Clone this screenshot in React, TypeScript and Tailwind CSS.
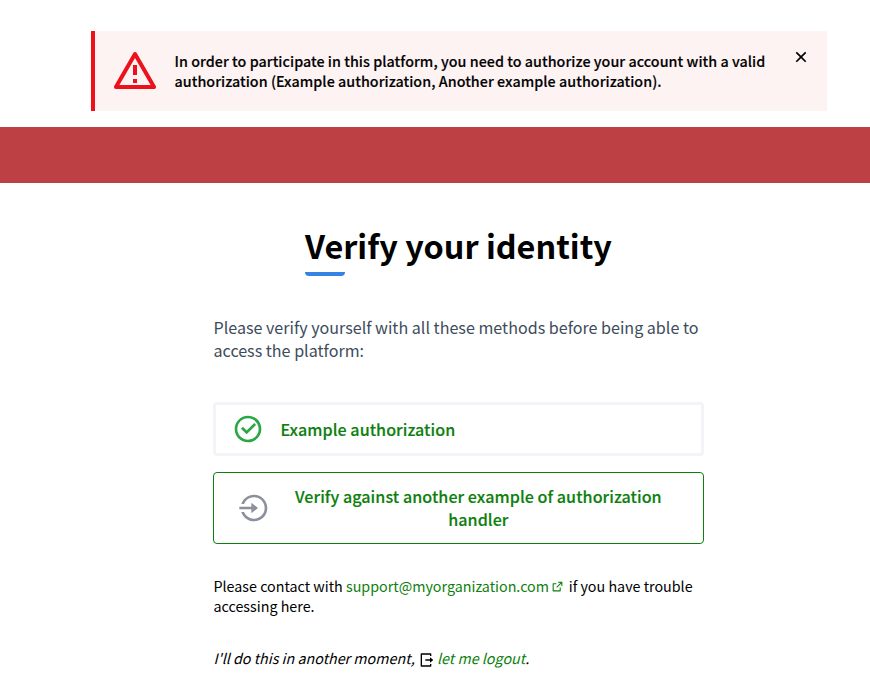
import {
  RiAlertLine,
  RiCheckboxCircleLine,
  RiCloseLine,
  RiExternalLinkLine,
  RiLoginCircleLine,
  RiLogoutBoxRLine,
} from "react-icons/ri";

function Alert() {
  return (
    <div className="ml-[91px] mt-[31px] flex h-20 w-[736px] border-l-4 border-[#ec111a] bg-[#fdf3f2]">
      <RiAlertLine className="ml-4 mt-4 size-12 shrink-0 text-[#ec111a]" />
      <p className="ml-[15.5px] mt-5 grow whitespace-nowrap text-[14.3px] leading-5 font-medium tracking-[0.045px] text-[#020203] [-webkit-text-stroke:0.15px_#020203]">
        In order to participate in this platform, you need to authorize your account with a valid
        <br />
        authorization (Example authorization, Another example authorization).
      </p>
      <button className="mr-4 mt-4 size-5 shrink-0" aria-label="Close">
        <RiCloseLine className="size-5" />
      </button>
    </div>
  );
}

export default function App() {
  return (
    <div className="flex h-[681px] w-[870px] flex-col overflow-hidden bg-white font-['Noto_Sans_CJK_SC',sans-serif] text-black">
      <Alert />
      <div className="mt-4 h-14 shrink-0 bg-[#bd4044]" />
      <main className="ml-[213px] w-[491px]">
        <div className="ml-[92px] mt-[39px] w-max">
          <h1 className="whitespace-nowrap text-[32.4px] leading-[45px] font-bold">Verify your identity</h1>
          <div className="mt-[5px] h-1 w-10 rounded-b bg-[#3584e4]" />
        </div>
        <p className="mt-10 whitespace-nowrap pl-[0.5px] text-[16.1px] leading-[23px] text-[#3e4c5c]">
          Please verify yourself with all these methods before being able to
          <br />
          access the platform:
        </p>
        <div className="mt-10 flex h-[54px] items-center rounded border-[3px] border-[#f3f4f7] pl-4">
          <RiCheckboxCircleLine className="size-8 text-[#28a745]" />
          <span className="ml-[16.5px] text-[16.1px] leading-[23px] font-medium tracking-[0.055px] text-[#0d7f0d] [-webkit-text-stroke:0.15px_#0d7f0d]">
            Example authorization
          </span>
        </div>
        <button className="mt-4 flex h-[72px] w-full items-center rounded border border-[#0d7f0d] pl-6">
          <RiLoginCircleLine className="size-8 shrink-0 text-[#8b909c]" />
          <span className="ml-[25px] whitespace-nowrap text-center text-[16.1px] leading-[23px] font-medium tracking-[0.055px] text-[#0d7f0d] [-webkit-text-stroke:0.15px_#0d7f0d]">
            Verify against another example of authorization
            <br />
            handler
          </span>
        </button>
        <p className="mt-8 whitespace-nowrap pl-[0.5px] text-[14.3px] leading-5">
          Please contact with <a className="text-[#0d7f0d]">support@myorganization.com</a>
          <RiExternalLinkLine className="ml-[1.7px] mr-[1.8px] inline size-[13px] align-[-1px] text-[#0d7f0d]" /> if you have trouble
          <br />
          accessing here.
        </p>
        <p className="mt-8 whitespace-nowrap pl-[0.5px] text-[14.3px] leading-5 italic">
          I'll do this in another moment, <RiLogoutBoxRLine className="inline size-4 align-[-4px]" />{" "}
          <a className="text-[#0d7f0d]">let me logout</a>.
        </p>
      </main>
    </div>
  );
}
